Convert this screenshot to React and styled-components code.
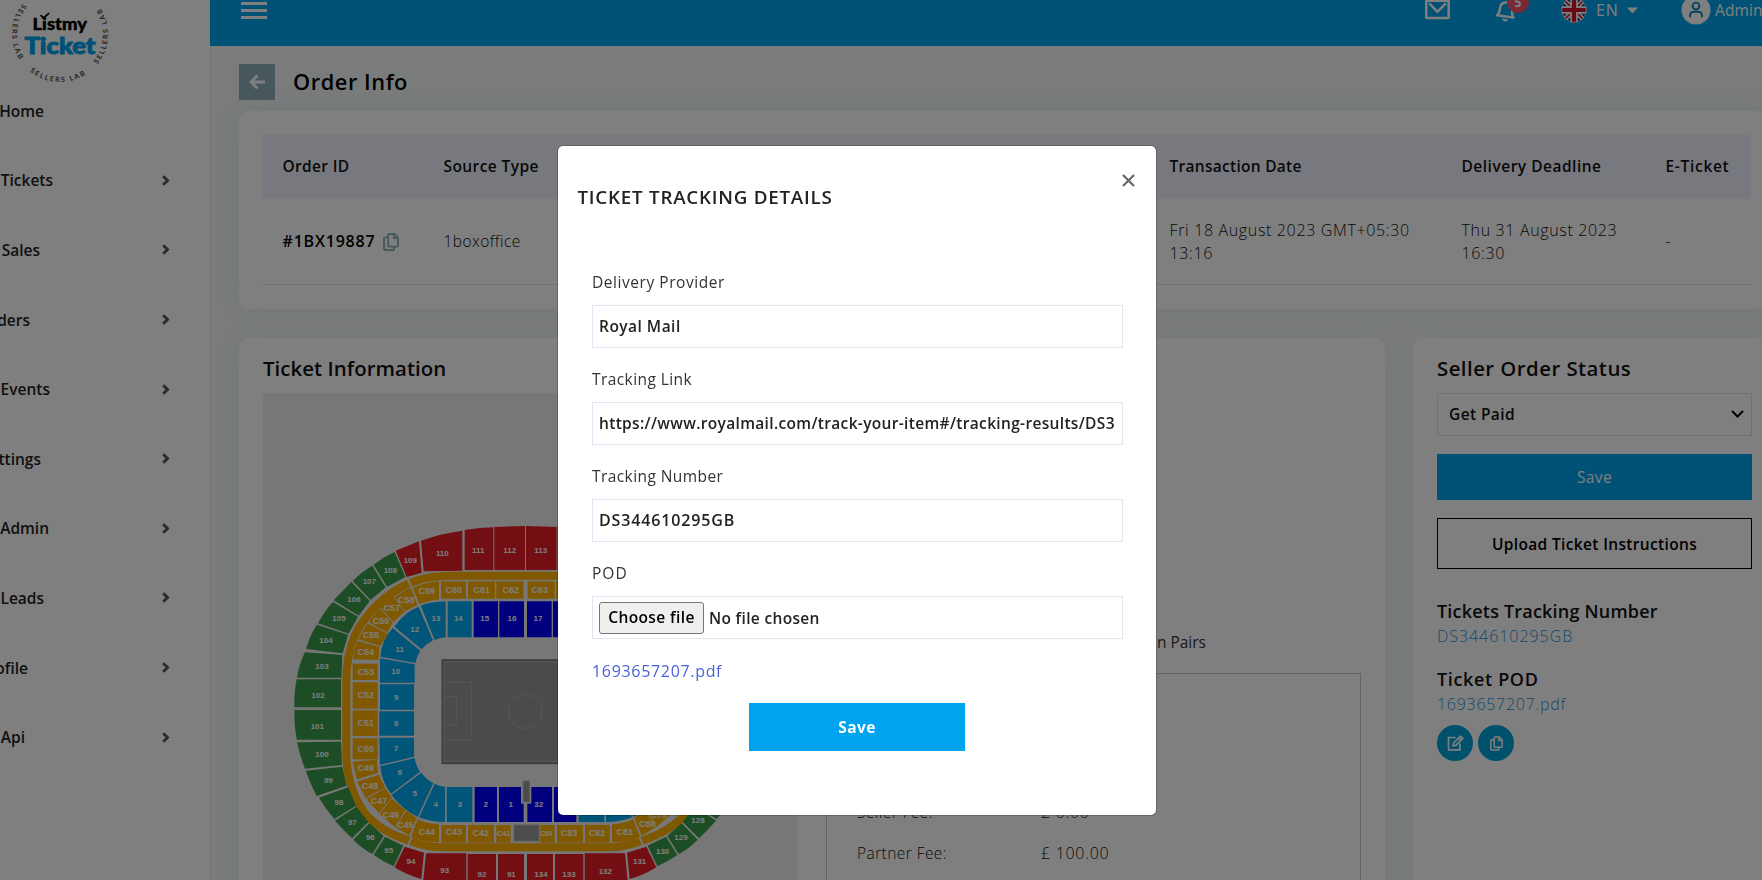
import React from 'react';
import styled, { createGlobalStyle } from 'styled-components';

const GlobalStyle = createGlobalStyle`
  *, *::before, *::after { box-sizing: border-box; }
  html, body { margin: 0; padding: 0; }
  body { overflow: hidden; font-family: "Open Sans", "Noto Sans", sans-serif; font-size: 15.5px; color: #222; }
  svg { display: block; flex: none; }
  button, input { font-family: inherit; }
`;

/* ---------- shell ---------- */
const Shell = styled.div`
  display: flex;
  width: 1762px;
  height: 880px;
  overflow: hidden;
  background: #f4f8f7;
`;

const Sidebar = styled.aside`
  flex: none;
  width: 210px;
  height: 880px;
  background: #fff;
  box-shadow: 1px 0 0 #dde4e6;
`;

const LogoBox = styled.div`
  height: 76px;
`;

const NavItem = styled.a`
  display: flex;
  align-items: center;
  justify-content: space-between;
  height: 69.6px;
  padding-right: 40px;
  color: #222;
  font-weight: 600;
`;

const NavLabel = styled.span`
  display: flex;
  justify-content: flex-end;
  width: ${(p) => p.$w}px;
  overflow: hidden;
  white-space: nowrap;
  line-height: 24px;
`;

const Main = styled.main`
  flex: none;
  width: 1567px;
`;

const TopBar = styled.header`
  height: 46px;
  background: #00a3ed;
  padding-left: 31px;
`;

const TopBarRow = styled.div`
  display: flex;
  align-items: center;
  height: 20px;
  color: #fff;
`;

const Burger = styled.div`
  display: flex;
  flex-direction: column;
  gap: 4px;
  width: 26px;
  padding-top: 1px;
  span { height: 3px; background: #fff; }
`;

const TopTools = styled.div`
  display: flex;
  align-items: center;
  margin-left: 1158px;
  line-height: 20px;
`;

const BellWrap = styled.div`
  position: relative;
  margin-left: 45px;
`;

const Badge = styled.span`
  position: absolute;
  left: 12px;
  top: -7px;
  width: 22px;
  height: 22px;
  border-radius: 50%;
  background: #f1556c;
  color: #fff;
  font-size: 12px;
  font-weight: 700;
  line-height: 23px;
  text-align: center;
`;

const Language = styled.div`
  display: flex;
  align-items: center;
  margin-left: 43px;
  span { margin: 0 8px 0 9px; width: 23px; font-size: 16px; letter-spacing: 0.8px; }
`;

const Account = styled.div`
  display: flex;
  align-items: center;
  gap: 4px;
  margin-left: 43px;
  letter-spacing: 0.1px;
`;

const Content = styled.div`
  padding: 18px 0 0 29px;
`;

const TitleRow = styled.div`
  display: flex;
  align-items: center;
  gap: 18px;
  height: 36px;
  margin-bottom: 11px;
`;

const BackButton = styled.div`
  display: flex;
  align-items: center;
  justify-content: center;
  width: 36px;
  height: 36px;
  background: #90aeb8;
`;

const PageTitle = styled.h1`
  margin: 0 0 2px;
  font-size: 21.8px;
  font-weight: 600;
  color: #000;
  letter-spacing: 0.55px;
`;

const Card = styled.section`
  background: #fff;
  border-radius: 10px;
  box-shadow: 0 0 26px rgba(90, 110, 200, 0.09);
`;

/* ---------- order table ---------- */
const OrderCard = styled(Card)`
  height: 198px;
  padding: 24px 25px 0 24px;
  margin-bottom: 29px;
`;

const TableRow = styled.div`
  display: grid;
  grid-template-columns: 161px 726px 292px 204px 105px;
  align-items: center;
  width: 1488px;
  height: ${(p) => (p.$head ? 64 : 86)}px;
  padding-bottom: ${(p) => (p.$head ? 1 : 0)}px;
  background: ${(p) => (p.$head ? '#f1f3fd' : 'transparent')};
  border-bottom: ${(p) => (p.$head ? 'none' : '1px solid #dfe2ea')};
`;

const Cell = styled.div`
  display: flex;
  align-items: center;
  padding-left: 19.5px;
  font-size: ${(p) => p.$size || 15.5}px;
  font-weight: ${(p) => p.$weight || 350};
  letter-spacing: ${(p) => p.$ls || 0}px;
  line-height: 23px;
  color: ${(p) => p.$color || '#111'};
  white-space: pre-line;
  svg { margin-left: 8px; }
`;

/* ---------- lower cards ---------- */
const Columns = styled.div`
  display: flex;
  gap: 28px;
`;

const TicketCard = styled(Card)`
  width: 1146px;
  height: 600px;
  padding: 15px 24px 0;
`;

const SectionTitle = styled.h2`
  margin: 0 0 10px;
  font-size: 20.4px;
  font-weight: 600;
  line-height: 30px;
  color: #111;
  letter-spacing: ${(p) => p.$ls || 0}px;
`;

const TicketBody = styled.div`
  display: flex;
  gap: 29px;
`;

const MapBox = styled.div`
  flex: none;
  width: 534px;
  height: 520px;
  background: #eee;
`;

const Details = styled.div`
  flex: none;
  width: 535px;
  padding-top: 237px;
`;

const SplitLine = styled.div`
  width: 380px;
  margin-bottom: 19px;
  line-height: 24px;
  text-align: right;
  color: #333;
`;

const FeeBox = styled.div`
  height: 300px;
  padding: 117.500px 30px 0;
  border: 1px solid #c8c8c8;
`;

const FeeRow = styled.div`
  display: grid;
  grid-template-columns: 184px 1fr;
  height: 41.6px;
  line-height: 41.6px;
  font-weight: 350;
  color: #111;
  letter-spacing: 0.43px;
  span + span { font-size: 16px; letter-spacing: 0.7px; }
`;

const StatusCard = styled(Card)`
  width: 363px;
  height: 600px;
  padding: 15px 24px 0;
`;

const Select = styled.div`
  display: flex;
  align-items: center;
  justify-content: space-between;
  height: 43px;
  margin-bottom: 18px;
  padding: 0 7px 1px 11px;
  border: 1px solid #dfe3ee;
  font-weight: 600;
  letter-spacing: 0.4px;
  color: #111;
`;

const WideButton = styled.button`
  display: block;
  width: 100%;
  height: ${(p) => (p.$outline ? 51 : 46)}px;
  margin: 0 0 ${(p) => (p.$outline ? 29 : 18)}px;
  border: ${(p) => (p.$outline ? '1px solid #000' : 'none')};
  background: ${(p) => (p.$outline ? '#fff' : '#00a3ed')};
  color: ${(p) => (p.$outline ? '#000' : '#fff')};
  font-size: 15.5px;
  font-weight: ${(p) => (p.$outline ? 600 : 400)};
  letter-spacing: 0.35px;
`;

const InfoHead = styled.h3`
  margin: 0;
  font-size: 18px;
  font-weight: 600;
  line-height: 26px;
  color: #111;
  letter-spacing: ${(p) => p.$ls}px;
`;

const InfoLink = styled.a`
  display: block;
  margin-bottom: ${(p) => p.$mb}px;
  font-size: 16px;
  font-weight: 350;
  line-height: 24px;
  letter-spacing: ${(p) => p.$ls}px;
  color: #1f8fdc;
`;

const RoundButtons = styled.div`
  display: flex;
  gap: 5px;
`;

const RoundButton = styled.div`
  display: flex;
  align-items: center;
  justify-content: center;
  width: 36px;
  height: 36px;
  border-radius: 50%;
  background: #00a2d8;
`;

/* ---------- modal ---------- */
const Backdrop = styled.div`
  position: fixed;
  inset: 0;
  padding: 145px 0 0 557px;
  background: rgba(0, 0, 0, 0.5);
`;

const Dialog = styled.div`
  width: 600px;
  height: 671px;
  background: #fff;
  background-clip: padding-box;
  border: 1px solid rgba(0, 0, 0, 0.2);
  border-radius: 6px;
`;

const DialogHead = styled.div`
  display: flex;
  justify-content: space-between;
  height: 124px;
  padding: 28px 21px 0 19.500px;
`;

const DialogTitle = styled.h4`
  margin: 8px 0 0;
  font-size: 18.8px;
  font-weight: 600;
  line-height: 30px;
  color: #222;
  letter-spacing: 0.76px;
`;

const DialogBody = styled.div`
  padding: 0 33px 0 34px;
`;

const Field = styled.div`
  height: 97px;
`;

const Label = styled.label`
  display: block;
  margin-bottom: 11px;
  line-height: 24px;
  color: #333;
  letter-spacing: ${(p) => p.$ls}px;
`;

const Box = styled.div`
  display: flex;
  align-items: center;
  height: 43px;
  padding: ${(p) => (p.$file ? '1px 7px 0 6px' : '0 7px 1px 6px')};
  border: 1px solid #e0e5f2;
  font-size: ${(p) => p.$size || 15.5}px;
  font-weight: 600;
  letter-spacing: ${(p) => p.$ls}px;
  color: #222;
`;

const Value = styled.div`
  flex: 1;
  overflow: hidden;
  white-space: nowrap;
  line-height: 26px;
`;

const FileButton = styled.span`
  width: 105px;
  height: 32px;
  margin-right: 5px;
  border: 1px solid #767676;
  border-radius: 3px;
  background: #efefef;
  color: #000;
  line-height: 29px;
  text-align: center;
  letter-spacing: 0.4px;
`;

const PdfLink = styled.a`
  display: block;
  padding-top: 1px;
  font-size: 16px;
  line-height: 24px;
  letter-spacing: 0.68px;
  color: #4a62da;
`;

const SaveButton = styled.button`
  display: block;
  width: 216px;
  height: 48px;
  margin: 20px 0 0 157px;
  border: 0;
  background: #00a3ed;
  color: #fff;
  font-size: 15.5px;
  font-weight: 700;
  letter-spacing: 0.4px;
`;

/* ---------- icons ---------- */
const Chevron = () => (
  <svg width="8" height="11" viewBox="0 0 8 11" fill="none" stroke="#555" strokeWidth="2.8">
    <path d="M1.2 1.2L5.6 5.5L1.2 9.8" />
  </svg>
);

const CopyIcon = ({ color, w = 16, h = 18 }) => (
  <svg width={w} height={h} viewBox="0 0 16 18" fill="none" stroke={color} strokeWidth="1.8" strokeLinejoin="round">
    <path d="M6.2 1H11.5L15 4.6V12.6A1 1 0 0 1 14 13.6H6.2A1 1 0 0 1 5.2 12.6V2A1 1 0 0 1 6.2 1Z" />
    <path d="M10.8 1.2V5.2H14.8" />
    <path d="M5 4.4H2A1 1 0 0 0 1 5.4V16A1 1 0 0 0 2 17H10A1 1 0 0 0 11 16V13.8" />
  </svg>
);

const EditIcon = () => (
  <svg width="17" height="16" viewBox="0 0 17 16" fill="none" stroke="#fff" strokeWidth="1.7" strokeLinejoin="round">
    <path d="M8.5 2.5H1.5V14.8H13V8.5" />
    <path d="M6 11L6.600 8L13.500 1.100L15.800 3.400L8.900 10.300Z" />
    <path d="M11.700 3L14 5.300" />
  </svg>
);

const MailIcon = () => (
  <svg width="25" height="20" viewBox="0 0 25 20" fill="none" stroke="#fff" strokeWidth="2.5">
    <rect x="1.300" y="0.800" width="22.400" height="17.200" rx="0.500" />
    <path d="M4.200 3.300L12.500 11.800L20.800 3.300" />
  </svg>
);

const BellIcon = () => (
  <svg width="23" height="24" viewBox="0 0 23 24" fill="none" stroke="#fff" strokeWidth="2.500" strokeLinejoin="round">
    <g transform="rotate(8 11 12)">
      <path d="M3 18.500C4.800 16.500 4.800 14 4.800 11C4.800 6.500 7.500 4.500 11 4.500S17.200 6.500 17.200 11C17.200 14 17.200 16.500 19.500 18.500Z" />
      <path d="M9 21.400A2.400 2.400 0 0 0 13.600 21.400Z" fill="#fff" strokeWidth="1" />
    </g>
  </svg>
);

const Flag = () => (
  <svg width="26" height="26" viewBox="0 0 26 26">
    <clipPath id="flagRound"><circle cx="13" cy="13" r="12.500" /></clipPath>
    <g clipPath="url(#flagRound)">
      <rect width="26" height="26" fill="#22408f" />
      <path d="M0 0L26 26M26 0L0 26" stroke="#fff" strokeWidth="4.600" />
      <path d="M0 0L26 26M26 0L0 26" stroke="#d0142c" strokeWidth="1.600" />
      <path d="M13 0V26M0 13H26" stroke="#fff" strokeWidth="7.500" />
      <path d="M13 0V26M0 13H26" stroke="#d0142c" strokeWidth="4.200" />
    </g>
    <circle cx="13" cy="13" r="12.300" fill="none" stroke="#fff" strokeWidth="1" opacity="0.700" />
  </svg>
);

const Avatar = () => (
  <svg width="30" height="30" viewBox="0 0 30 30">
    <circle cx="15" cy="15" r="14.500" fill="#fff" />
    <g fill="none" stroke="#0a85bd" strokeWidth="1.900" strokeLinecap="round">
      <circle cx="15" cy="11" r="3.400" />
      <path d="M9 21.500V20.500A4 4 0 0 1 13 16.800H17A4 4 0 0 1 21 20.500V21.500" />
    </g>
  </svg>
);

const Logo = () => (
  <svg width="120" height="84" viewBox="0 0 120 84" fontFamily="Lato, sans-serif">
    <defs>
      <path id="logoRing" d="M12 34A48 48 0 0 0 108 34" />
    </defs>
    {[0, 1, 2, 3].map((k) => (
      <g key={k} transform={`rotate(${2.5 - k * 90} 60 34)`}>
        <text fontSize="7" fontWeight="700" fill="#444" textAnchor="middle" letterSpacing="1.700">
          <textPath href="#logoRing" startOffset="50%">SELLERS LAB</textPath>
        </text>
      </g>
    ))}
    <text x="32.500" y="30" fontSize="17" fontWeight="900" fill="#000" stroke="#000" strokeWidth="0.400" strokeLinejoin="round" textLength="54.500" lengthAdjust="spacingAndGlyphs">Listmy</text>
    <path d="M40.500 15.200L43.600 18L49 13.200" fill="none" stroke="#000" strokeWidth="1.700" />
    <text x="24.500" y="53.500" fontSize="23.500" fontWeight="900" fill="#00a3ed" stroke="#00a3ed" strokeWidth="1" strokeLinejoin="round" textLength="71" lengthAdjust="spacingAndGlyphs">Ticket</text>
  </svg>
);

/* ---------- stadium ---------- */
const RED = '#e61c26';
const GREEN = '#389a4a';
const GOLD = '#ffb000';
const SKY = '#00aaf0';
const NAVY = '#0000ff';

const rect = (x1, y1, x2, y2) => `M${x1} ${y1}H${x2}V${y2}H${x1}Z`;

/* [fill, outline, label, label x, label y] */
const blocks = [
  [RED, 'M347 152L417 124L425 218L380 231Z', '109', 391, 181],
  [RED, 'M423 122Q485 100 547 92V212L431 214Z', '110', 487, 160],
  [RED, 'M554 90Q598 82 640 82V210H554Z', '111', 595, 151],
  [RED, 'M643 81L735 78V210H643Z', '112', 689, 151],
  [GREEN, 'M281 194Q312 170 344 156L376 231L321 260Z', '108', 331, 210],
  [GREEN, 'M218 243Q245 215 277 197L317 262L272 300Z', '107', 268, 244],
  [GREEN, 'M161 301L214 246L269 303L236 347Z', '106', 222, 298],
  [GREEN, 'M114 370Q135 330 159 306L234 350L206 401Z', '105', 177, 355],
  [GREEN, 'M78 447Q90 405 111 374L204 404L188 460Z', '104', 138, 421],
  [GREEN, 'M51 533Q58 490 75 457L187 465L184 533Z', '103', 126, 499],
  [GREEN, 'M50 538H183V622H43Q42 575 50 538Z', '102', 114, 586],
  [GREEN, 'M43 630H183V719H50Q42 675 43 630Z', '101', 112, 679],
  [GREEN, 'M51 727L183 725L186 795L75 806Q60 770 51 727Z', '100', 126, 763],
  [GREEN, 'M77 812L187 800L200 857L110 888Q90 850 77 812Z', '99', 145, 841],
  [GREEN, 'M117 893L205 862L228 917L163 957Q135 925 117 893Z', '98', 177, 906],
  [GREEN, 'M165 962L229 920L265 966L216 1015Q190 990 165 962Z', '97', 217, 966],
  [GREEN, 'M220 1019L268 970L311 1008L277 1062Q245 1045 220 1019Z', '96', 271, 1011],
  [GREEN, 'M281 1065L315 1010L370 1037L341 1099Q310 1085 281 1065Z', '95', 326, 1051],
  [RED, 'M344 1102L374 1040L432 1058L424 1137Q380 1125 344 1102Z', '94', 393, 1083],
  [RED, 'M438 1060H559V1150L430 1140Z', '93', 494, 1110],
  [RED, rect(563, 1062, 648, 1150), '92', 606, 1122],
  [RED, rect(654, 1062, 732, 1150), '91', 694, 1122],
  [GOLD, 'M398 263Q440 246 477 244V298Q450 302 418 312Z', 'C59', 440, 273],
  [GOLD, rect(483, 244, 558, 296), 'C60', 521, 270],
  [GOLD, rect(564, 244, 645, 296), 'C61', 605, 270],
  [GOLD, rect(649, 244, 730, 296), 'C62', 692, 270],
  [GOLD, 'M345 292Q370 272 393 264L412 315L375 334Z', 'C58', 379, 301],
  [GOLD, 'M300 322L340 289L373 335L341 365Z', 'C57', 335, 325],
  [GOLD, 'M266 366L298 324L338 367L322 398Z', 'C56', 303, 363],
  [GOLD, 'M235 418L262 370L325 403L300 438Z', 'C55', 273, 405],
  [GOLD, 'M219 478Q222 445 234 423L298 441L295 480Z', 'C54', 257, 456],
  [GOLD, rect(218, 491, 293, 540), 'C53', 257, 516],
  [GOLD, rect(218, 547, 293, 626), 'C52', 257, 585],
  [GOLD, rect(218, 631, 293, 708), 'C51', 257, 669],
  [GOLD, rect(218, 715, 293, 778), 'C50', 257, 746],
  [GOLD, 'M218 785L290 779L294 818L231 838Z', 'C49', 257, 804],
  [GOLD, 'M232 845L296 824L315 862L257 895Z', 'C48', 270, 858],
  [GOLD, 'M259 898L316 864L336 893L297 939Z', 'C47', 297, 903],
  [GOLD, 'M299 942L335 896L376 930L344 981Z', 'C46', 333, 945],
  [GOLD, 'M346 982L379 932L410 953L388 1007Z', 'C45', 376, 976],
  [GOLD, 'M413 958Q440 972 477 973V1027Q430 1027 393 1010Z', 'C44', 440, 996],
  [GOLD, rect(484, 975, 558, 1028), 'C43', 521, 996],
  [GOLD, rect(564, 975, 642, 1028), 'C42', 602, 999],
  [GOLD, rect(649, 975, 692, 1028), 'C41', 671, 1000],
  [SKY, 'M422 317Q455 305 497 304V412Q480 412 464 420Z', '13', 468, 355],
  [SKY, rect(503, 304, 575, 412), '14', 535, 355],
  [NAVY, rect(581, 304, 654, 412), '15', 614, 355],
  [NAVY, rect(658, 304, 732, 412), '16', 696, 355],
  [SKY, 'M343 380Q375 335 416 320L459 421Q440 430 425 448Z', '12', 404, 388],
  [SKY, 'M301 470Q305 420 338 384L421 452Q410 468 406 489Z', '11', 359, 448],
  [SKY, 'M300 475L404 493V548H300Z', '10', 347, 514],
  [SKY, rect(300, 553, 402, 629), '9', 349, 591],
  [SKY, rect(298, 634, 402, 707), '8', 349, 669],
  [SKY, 'M298 713H402V770L300 795Z', '7', 348, 745],
  [SKY, 'M301 799L404 774Q408 798 420 815L333 881Q305 845 301 799Z', '6', 359, 817],
  [SKY, 'M334 885L424 818Q440 840 460 849L413 951Q370 930 334 885Z', '5', 404, 880],
  [SKY, 'M417 952L464 851Q480 860 495 860V966Q450 966 417 952Z', '4', 467, 913],
  [SKY, rect(500, 861, 577, 966), '3', 539, 913],
  [NAVY, rect(584, 861, 651, 966), '2', 617, 913],
  [NAVY, rect(657, 861, 731, 966), '1', 692, 913],
];

const farLabels = [
  ['113', 782, 151], ['17', 774, 355], ['C63', 779, 270], ['32', 776, 913],
  ['134', 783, 1122], ['133', 867, 1122], ['132', 976, 1113], ['131', 1079, 1083],
  ['130', 1148, 1053], ['129', 1203, 1011], ['128', 1254, 961],
  ['C83', 867, 999], ['C82', 951, 999], ['C81', 1034, 996], ['C80', 1102, 973], ['C79', 1136, 946],
];

const BAND = 'M737 227H520C450 227 415 239 383 252C310 285 255 345 225 405C208 445 199 490 199 540V760C199 830 220 890 255 940C290 982 335 1005 388 1022C425 1036 450 1042 490 1042H737';

const SeatLabel = ({ t, x, y, size }) => (
  <text x={x} y={y + 9} fontSize={size || (t[0] === 'C' ? 27 : 24)} textAnchor="middle">{t}</text>
);

const Half = () => (
  <g>
    <path d={BAND} fill="none" stroke={GOLD} strokeWidth="24" />
    <path d="M380 232L398 268M384 1036L396 1008" stroke="#eee" strokeWidth="6" />
    {blocks.map(([fill, d, t]) => <path key={t} d={d} fill={fill} />)}
  </g>
);

const Stadium = () => (
  <svg width="534" height="487" viewBox="263 393 534 487">
    <g transform="translate(280 500) scale(0.33333)">
      <Half />
      <g transform="translate(1473 0) scale(-1 1)"><Half /></g>
      <rect x="702" y="975" width="75" height="48" fill="#999997" stroke="#b5b5b3" strokeWidth="3" />
      <rect x="487" y="480" width="499" height="310" fill="#979795" stroke="#7d7d7b" strokeWidth="5" />
      <g fill="none" stroke="#adadab" strokeWidth="3">
        <rect x="493" y="486" width="487" height="298" />
        <path d="M493 547H575V719H493M493 590H529V675H493" />
        <circle cx="736" cy="634" r="51" />
      </g>
      <rect x="723" y="841" width="31" height="70" fill="#eee" />
      <rect x="730" y="843" width="18" height="62" fill="#979795" stroke="#b0b0ae" strokeWidth="3" />
      <g fill="#fff" fontFamily="'Liberation Sans', Arial, sans-serif" fontWeight="700">
        {blocks.map(([, , t, x, y]) => <SeatLabel key={t} t={t} x={x} y={y} size={t === 'C41' ? 22 : undefined} />)}
        {farLabels.map(([t, x, y]) => <SeatLabel key={t} t={t} x={x} y={y} />)}
        <SeatLabel t="C84" x={799} y={998} size={19} />
      </g>
    </g>
  </svg>
);

/* ---------- data ---------- */
const nav = [
  ['Home', 44, false], ['Tickets', 53, true], ['Sales', 40, true], ['Orders', 30, true], ['Events', 50, true],
  ['Settings', 41, true], ['Admin', 49, true], ['Leads', 44, true], ['Profile', 28, true], ['Api', 25, true],
];

export default function App() {
  return (
    <>
      <GlobalStyle />
      <Shell>
        <Sidebar>
          <LogoBox><Logo /></LogoBox>
          {nav.map(([label, w, sub]) => (
            <NavItem key={label}>
              <NavLabel $w={w}>{label}</NavLabel>
              {sub && <Chevron />}
            </NavItem>
          ))}
        </Sidebar>
        <Main>
          <TopBar>
            <TopBarRow>
              <Burger><span /><span /><span /></Burger>
              <TopTools>
                <MailIcon />
                <BellWrap><BellIcon /><Badge>5</Badge></BellWrap>
                <Language>
                  <Flag />
                  <span>EN</span>
                  <svg width="11" height="7" viewBox="0 0 11 7"><path d="M0 0.500H11L5.500 6.500Z" fill="#fff" /></svg>
                </Language>
                <Account><Avatar />Admin</Account>
              </TopTools>
            </TopBarRow>
          </TopBar>
          <Content>
            <TitleRow>
              <BackButton>
                <svg width="17" height="16" viewBox="0 0 17 16" fill="none" stroke="#fff" strokeWidth="3">
                  <path d="M16 8H2.500M8.500 1.500L2 8L8.500 14.500" />
                </svg>
              </BackButton>
              <PageTitle>Order Info</PageTitle>
            </TitleRow>
            <OrderCard>
              <TableRow $head>
                <Cell $weight={600} $ls={0.35}>Order ID</Cell>
                <Cell $weight={600} $ls={0.42}>Source Type</Cell>
                <Cell $weight={600} $ls={0.28}>Transaction Date</Cell>
                <Cell $weight={600} $ls={0.5}>Delivery Deadline</Cell>
                <Cell $weight={600} $ls={0.7}>E-Ticket</Cell>
              </TableRow>
              <TableRow>
                <Cell $weight={600} $size={16} $ls={0.8} $color="#000">#1BX19887<CopyIcon color="#90aeb8" /></Cell>
                <Cell $ls={0.45}>1boxoffice</Cell>
                <Cell $size={16} $ls={0.65}>{'Fri 18 August 2023 GMT+05:30\n13:16'}</Cell>
                <Cell $size={16} $ls={0.65}>{'Thu 31 August 2023\n16:30'}</Cell>
                <Cell>-</Cell>
              </TableRow>
            </OrderCard>
            <Columns>
              <TicketCard>
                <SectionTitle $ls={0.05}>Ticket Information</SectionTitle>
                <TicketBody>
                  <MapBox><Stadium /></MapBox>
                  <Details>
                    <SplitLine>In Pairs</SplitLine>
                    <FeeBox>
                      <FeeRow><span>Seller Fee:</span><span>£ 0.00</span></FeeRow>
                      <FeeRow><span>Partner Fee:</span><span>£ 100.00</span></FeeRow>
                    </FeeBox>
                  </Details>
                </TicketBody>
              </TicketCard>
              <StatusCard>
                <SectionTitle $ls={0.45}>Seller Order Status</SectionTitle>
                <Select>
                  Get Paid
                  <svg width="13" height="8" viewBox="0 0 13 8" fill="none" stroke="#000" strokeWidth="2"><path d="M1 1L6.500 6.500L12 1" /></svg>
                </Select>
                <WideButton>Save</WideButton>
                <WideButton $outline>Upload Ticket Instructions</WideButton>
                <InfoHead $ls={0.2}>Tickets Tracking Number</InfoHead>
                <InfoLink $ls={0.95} $mb={18}>DS344610295GB</InfoLink>
                <InfoHead $ls={0.65}>Ticket POD</InfoHead>
                <InfoLink $ls={0.72} $mb={9}>1693657207.pdf</InfoLink>
                <RoundButtons>
                  <RoundButton><EditIcon /></RoundButton>
                  <RoundButton><CopyIcon color="#fff" w={13} h={15} /></RoundButton>
                </RoundButtons>
              </StatusCard>
            </Columns>
          </Content>
        </Main>
      </Shell>
      <Backdrop>
        <Dialog>
          <DialogHead>
            <DialogTitle>TICKET TRACKING DETAILS</DialogTitle>
            <svg width="13" height="13" viewBox="0 0 13 13" stroke="#666" strokeWidth="2.200"><path d="M1 1L12 12M12 1L1 12" /></svg>
          </DialogHead>
          <DialogBody>
            <Field><Label $ls={0.55}>Delivery Provider</Label><Box $ls={0.48}><Value>Royal Mail</Value></Box></Field>
            <Field><Label $ls={0.42}>Tracking Link</Label><Box $ls={0.33}><Value>https://www.royalmail.com/track-your-item#/tracking-results/DS344610295GB</Value></Box></Field>
            <Field><Label $ls={0.42}>Tracking Number</Label><Box $size={16} $ls={0.85}><Value>DS344610295GB</Value></Box></Field>
            <Field><Label $ls={1}>POD</Label><Box $file $ls={0.33}><FileButton>Choose file</FileButton><Value>No file chosen</Value></Box></Field>
            <PdfLink>1693657207.pdf</PdfLink>
            <SaveButton>Save</SaveButton>
          </DialogBody>
        </Dialog>
      </Backdrop>
    </>
  );
}
